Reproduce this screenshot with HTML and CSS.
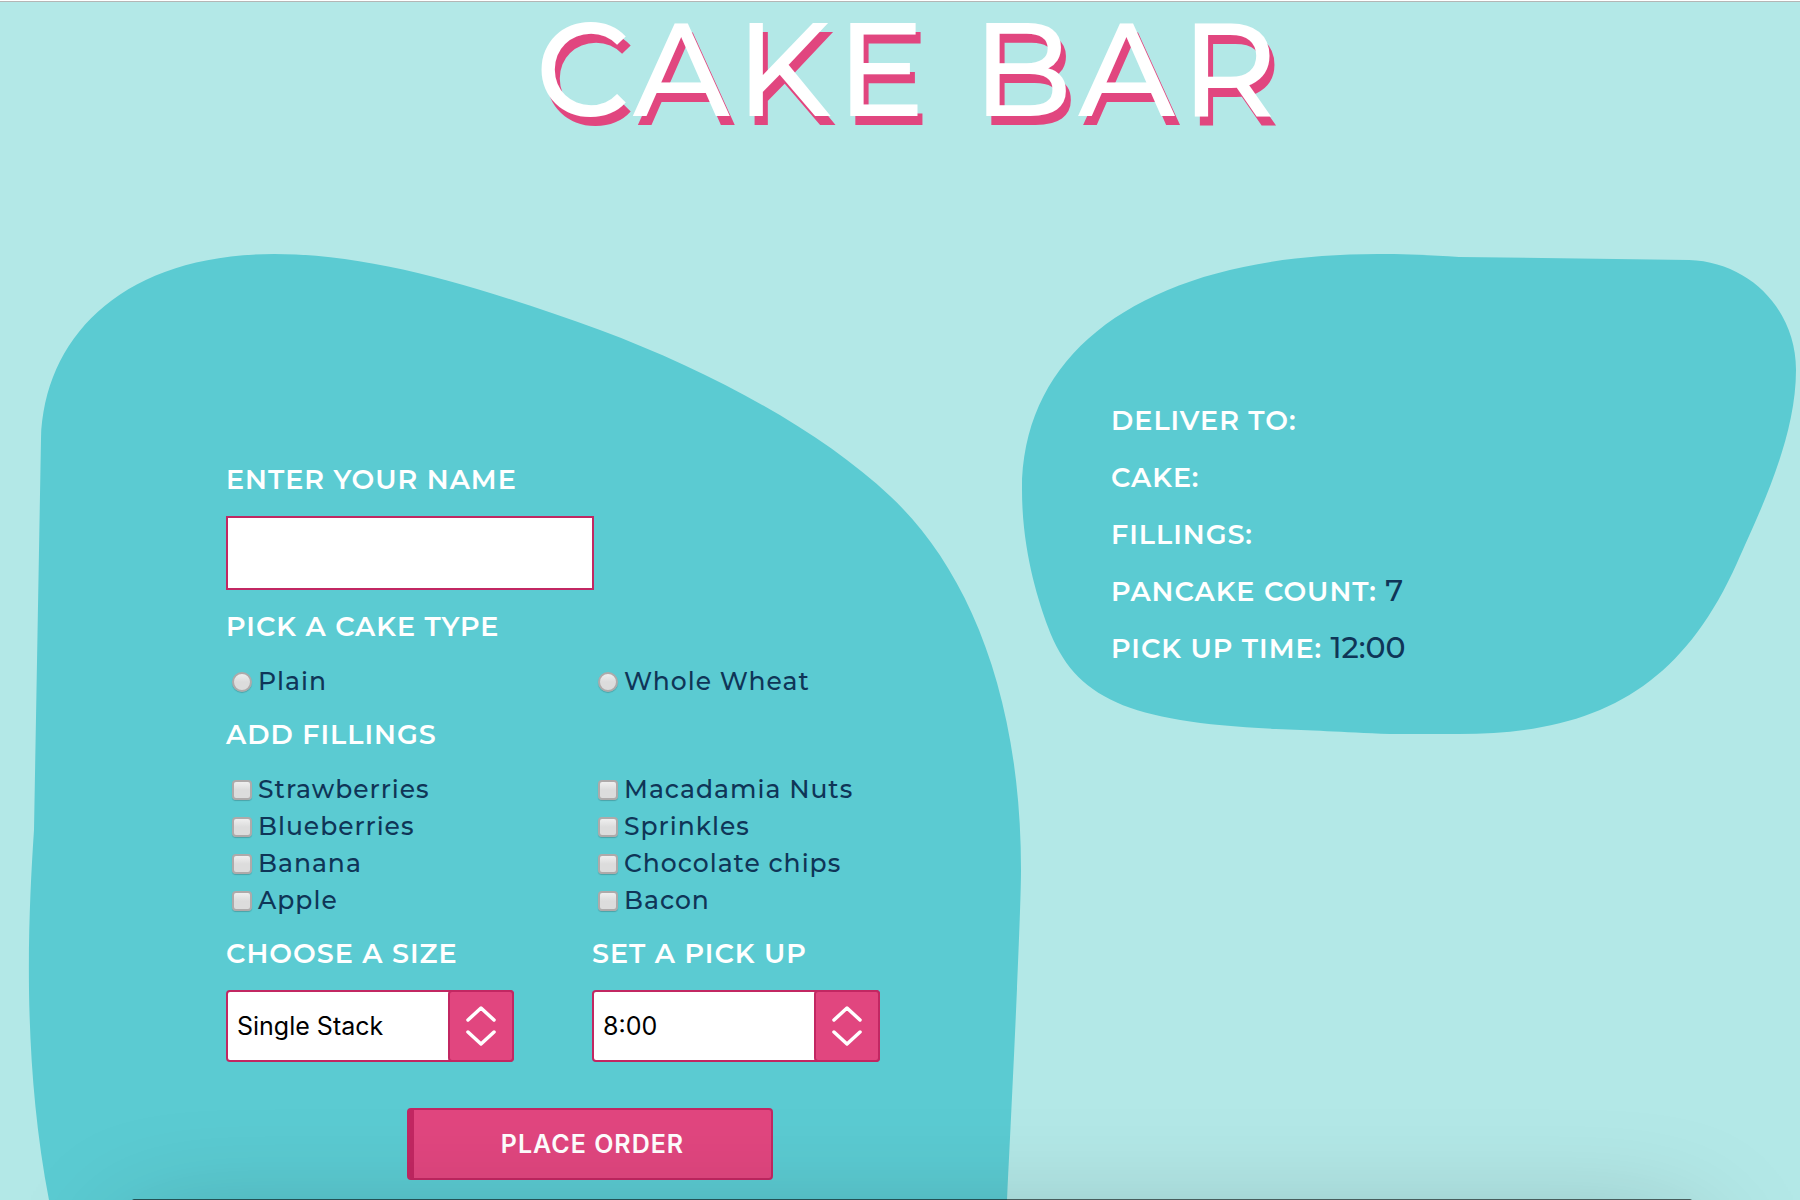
FILE: index.html
```html
<!DOCTYPE html>
<html lang="en">
<head>
  <meta charset="utf-8">
  <meta name="viewport" content="width=device-width, initial-scale=1">
  <title>Cake Bar</title>
  <link rel="stylesheet" href="styles.css">
</head>
<body>
  <header class="header">
    <h1 class="title">CAKE BAR</h1>
  </header>

  <main class="layout">
    <section class="panel panel-order">
      <svg class="blob blob-order" viewBox="0 0 1020 950" preserveAspectRatio="none" aria-hidden="true">
        <path d="M41 189 C44 85 125 4 274 4 C374 4 480 37 600 80 C710 121 820 180 890 246 C965 316 1021 440 1021 620 C1021 650 1017 750 1007 950 L49 950 C22 810 28 670 34 580 Z"/>
      </svg>
      <form class="form">
        <div class="field field-name">
          <label class="label" for="name">ENTER YOUR NAME</label>
          <input class="text-input" id="name" type="text" name="name">
        </div>

        <fieldset class="group">
          <legend class="label legend">PICK A CAKE TYPE</legend>
          <div class="options">
            <label class="option"><input class="tick radio" type="radio" name="type">Plain</label>
            <label class="option"><input class="tick radio" type="radio" name="type">Whole Wheat</label>
          </div>
        </fieldset>

        <fieldset class="group">
          <legend class="label legend">ADD FILLINGS</legend>
          <div class="options">
            <label class="option"><input class="tick" type="checkbox">Strawberries</label>
            <label class="option"><input class="tick" type="checkbox">Macadamia Nuts</label>
            <label class="option"><input class="tick" type="checkbox">Blueberries</label>
            <label class="option"><input class="tick" type="checkbox">Sprinkles</label>
            <label class="option"><input class="tick" type="checkbox">Banana</label>
            <label class="option"><input class="tick" type="checkbox">Chocolate chips</label>
            <label class="option"><input class="tick" type="checkbox">Apple</label>
            <label class="option"><input class="tick" type="checkbox">Bacon</label>
          </div>
        </fieldset>

        <div class="options">
          <div class="field">
            <label class="label" for="size">CHOOSE A SIZE</label>
            <div class="select-box">
              <select class="select" id="size">
                <option>Single Stack</option>
                <option>Double Stack</option>
              </select>
              <span class="stepper">
                <svg class="arrows" viewBox="0 0 30 42" aria-hidden="true"><path d="M2 15 L15 3 L28 15 M2 27 L15 39 L28 27"/></svg>
              </span>
            </div>
          </div>
          <div class="field">
            <label class="label" for="pickup">SET A PICK UP</label>
            <div class="select-box">
              <select class="select" id="pickup">
                <option>8:00</option>
                <option>12:00</option>
              </select>
              <span class="stepper">
                <svg class="arrows" viewBox="0 0 30 42" aria-hidden="true"><path d="M2 15 L15 3 L28 15 M2 27 L15 39 L28 27"/></svg>
              </span>
            </div>
          </div>
        </div>

        <button class="submit" type="button">PLACE ORDER</button>
      </form>
    </section>

    <section class="panel panel-summary">
      <svg class="blob blob-summary" viewBox="0 0 780 490" preserveAspectRatio="none" aria-hidden="true">
        <path d="M2 240 C2 90 140 4 358 4 C385 4 410 5 439 7 L669 10 C730 12 776 60 776 120 C776 190 738 265 717 313 C660 440 575 484 439 484 L370 484 C320 482 290 480 256 479 C110 472 55 450 28 377 C18 350 2 300 2 240 Z"/>
      </svg>
      <ul class="summary">
        <li>DELIVER TO:</li>
        <li>CAKE:</li>
        <li>FILLINGS:</li>
        <li>PANCAKE COUNT: <span class="value">7</span></li>
        <li>PICK UP TIME: <span class="value">12:00</span></li>
      </ul>
    </section>
  </main>

  <div class="drawer"></div>
</body>
</html>
```

FILE: styles.css
```css
* {
  box-sizing: border-box;
}

body {
  --page: #b3e8e7;
  --blob: #5bcbd2;
  --pink: #e1467f;
  --pink-dark: #c22762;
  --navy: #0f3557;
  margin: 0;
  min-height: 100vh;
  display: flex;
  flex-direction: column;
  overflow: hidden;
  background: var(--page);
  color: var(--navy);
  font-family: Montserrat, Inter, "Open Sans", sans-serif;
}

.header {
  padding: 2px 0 115px 18px;
  border-top: 1px solid #fff;
  box-shadow: inset 0 1px #b5b5b5;
}

.title {
  margin: 0;
  color: #fff;
  font-size: 132px;
  font-weight: 500;
  line-height: 132px;
  letter-spacing: 6px;
  text-align: center;
  text-shadow: 5px 9px var(--pink);
}

.layout {
  flex: 1;
  display: grid;
  grid-template-columns: 17fr 13fr;
}

.panel {
  position: relative;
}

.panel-order {
  padding: 213px 60px 10px 226px;
}

.panel-summary {
  padding: 142px 60px 10px 91px;
}

.blob {
  position: absolute;
  z-index: -1;
  top: 0;
  left: 0;
  width: 100%;
  overflow: visible;
  fill: var(--blob);
}

.blob-order {
  height: 100%;
}

.blob-summary {
  height: 490px;
}

.form {
  display: flex;
  flex-direction: column;
  gap: 18px;
  max-width: 728px;
}

.field {
  display: flex;
  flex-direction: column;
  align-items: flex-start;
  gap: 19px;
}

.field-name {
  padding-bottom: 2px;
}

.label,
.summary {
  color: #fff;
  font-size: 27px;
  font-weight: 600;
  letter-spacing: 1px;
}

.label {
  line-height: 34px;
}

.group {
  min-width: 0;
  margin: 0;
  padding: 0;
  border: 0;
}

.legend {
  padding: 0 0 19px;
}

.text-input {
  width: 368px;
  height: 74px;
  padding: 0 10px;
  border: 2px solid var(--pink-dark);
  border-radius: 0;
  background: #fff;
  font: inherit;
  font-size: 25px;
}

.options {
  display: grid;
  grid-template-columns: 366px 1fr;
}

.option {
  display: flex;
  align-items: center;
  gap: 6px;
  padding-left: 6px;
  font-size: 25px;
  font-weight: 500;
  line-height: 37px;
  letter-spacing: 1px;
}

.tick {
  appearance: none;
  width: 20px;
  height: 20px;
  margin: 0;
  border: 2px solid #aeaaaa;
  border-radius: 4px;
  background: linear-gradient(#efefef, #dcdcdc 50%);
  box-shadow: 0 1px 1px rgba(0, 0, 0, 0.2);
}

.radio {
  border-radius: 50%;
}

.select-box {
  position: relative;
  width: 288px;
  height: 72px;
}

.select {
  appearance: none;
  width: 100%;
  height: 100%;
  padding: 0 76px 0 9px;
  border: 2px solid var(--pink-dark);
  border-radius: 4px;
  background: #fff;
  color: #000;
  font-family: Inter, sans-serif;
  font-size: 25px;
}

.stepper {
  position: absolute;
  top: 0;
  right: 0;
  display: grid;
  place-items: center;
  width: 66px;
  height: 100%;
  border: 2px solid var(--pink-dark);
  border-radius: 4px;
  background: var(--pink);
  pointer-events: none;
}

.arrows {
  width: 30px;
  height: 42px;
  fill: none;
  stroke: #fff;
  stroke-width: 3.5;
  stroke-linecap: round;
  stroke-linejoin: round;
}

.submit {
  align-self: center;
  width: 366px;
  height: 72px;
  margin-top: 28px;
  border: 2px solid var(--pink-dark);
  border-left-width: 7px;
  border-radius: 4px;
  background: var(--pink);
  color: #fff;
  font-family: Inter, sans-serif;
  font-size: 25px;
  font-weight: 600;
  letter-spacing: 1px;
}

.summary {
  margin: 0;
  padding: 0;
  list-style: none;
  line-height: 57px;
}

.value {
  color: var(--navy);
  font-size: 30px;
  font-weight: 500;
  letter-spacing: 0;
  line-height: 34px;
}

/* Closed drawer: only its top edge and shadow show above the window's bottom */
.drawer {
  position: fixed;
  left: 132px;
  right: 108px;
  bottom: -399px;
  height: 400px;
  border-radius: 2px;
  background: rgba(0, 0, 0, 0.6);
  box-shadow: 0 36px 120px rgba(0, 0, 0, 0.26);
  pointer-events: none;
}
```
